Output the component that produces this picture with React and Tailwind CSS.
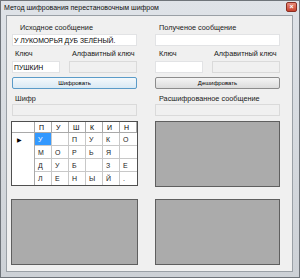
import React from 'react';

const font = { fontFamily: '"Liberation Sans", Arial, sans-serif' };

const header = ['П', 'У', 'Ш', 'К', 'И', 'Н'];
const rows = [
  ['У', '', 'П', 'У', 'К', 'О'],
  ['М', 'О', 'Р', 'Ь', 'Я', ''],
  ['Д', 'У', 'Б', '', 'З', 'Е'],
  ['Л', 'Е', 'Н', 'Ы', 'Й', '.'],
];

const Label = ({ children, className = '' }) => (
  <div className={`h-[10px] leading-[10px] text-[7.3px] text-[#1a1a1a] whitespace-nowrap ${className}`}>{children}</div>
);

const TextBox = ({ value = '', className = '', disabled = false }) => (
  <div
    className={`h-[12px] leading-[11px] text-[6.8px] text-black px-[1px] whitespace-nowrap overflow-hidden border ${
      disabled ? 'bg-[#f0f0f0] border-[#dadada]' : 'bg-white border-[#e2e3e5]'
    } ${className}`}
  >
    {value}
  </div>
);

const Button = ({ children, focused = false }) => (
  <div
    className={`h-[12px] rounded-[2px] border flex items-center justify-center text-[6px] text-black ${
      focused
        ? 'border-[#5b9bc8] bg-gradient-to-b from-[#f4f9fc] to-[#d9e9f4]'
        : 'border-[#8c8c8c] bg-gradient-to-b from-[#f5f5f5] to-[#dcdcdc]'
    }`}
  >
    {children}
  </div>
);

const GrayBox = ({ className = '' }) => (
  <div className={`h-[66px] bg-[#ababab] border border-[#5f5f5f] ${className}`} />
);

const CipherGrid = () => (
  <div className="-mx-[1px] border border-[#4f4f4f] bg-white">
    <div className="grid grid-cols-[23px_repeat(6,17px)]">
      <div className="h-[11px] border-b border-r border-[#a9a9a9]" />
      {header.map((h, i) => (
        <div key={i} className="h-[11px] leading-[11px] pl-[4px] text-[7px] border-b border-r border-[#a9a9a9] last:border-r-0">
          {h}
        </div>
      ))}
      {rows.map((r, ri) => (
        <React.Fragment key={ri}>
          <div className="h-[13px] flex items-center pl-[5px] border-r border-[#a9a9a9]">
            {ri === 0 && <span className="text-[6px] leading-none text-black">▶</span>}
          </div>
          {r.map((c, ci) => (
            <div
              key={ci}
              className={`h-[13px] leading-[13px] pl-[3px] text-[7px] border-b border-r border-[#c8c8c8] ${
                ci === 5 ? 'border-r-0' : ''
              } ${ri === 0 && ci === 0 ? 'bg-[#3399ff] text-white' : 'text-[#222]'} ${ri === 3 ? 'border-b-0' : ''}`}
            >
              {c}
            </div>
          ))}
        </React.Fragment>
      ))}
    </div>
  </div>
);

export default function App() {
  return (
    <div
      style={font}
      className="w-[300px] h-[278px] bg-gradient-to-b from-[#dfe3e8] to-[#cdd1d6] border border-[#6f747a] flex flex-col overflow-hidden"
    >
      {/* title bar */}
      <div className="h-[14px] flex items-center justify-between pl-[3px] pr-[2px]">
        <span className="text-[7px] text-[#111] whitespace-nowrap">Метод шифрования перестановочным шифром</span>
        <div className="w-[11px] h-[10px] mb-[3px] rounded-[2px] bg-gradient-to-b from-[#e88a7a] to-[#c8412c] border border-[#8a2e22] flex items-center justify-center text-[7px] leading-none text-white font-bold">
          ×
        </div>
      </div>

      {/* client area */}
      <div className="ml-[5px] mr-[6px] mb-[5px] flex-1 bg-[#f0f0f0] border border-[#9aa0a6] flex gap-[18px] pl-[5px] pt-[7px]">
        {/* left column */}
        <div className="w-[125px] flex flex-col">
          <Label className="pl-[8px]">Исходное сообщение</Label>
          <TextBox className="mt-[1px]" value="У ЛУКОМОРЬЯ ДУБ ЗЕЛЁНЫЙ." />
          <div className="mt-[3px] flex">
            <Label className="pl-[3px] w-[60px]">Ключ</Label>
            <Label>Алфавитный ключ</Label>
          </div>
          <div className="mt-[2px] flex gap-[9px]">
            <TextBox className="w-[48px]" value="ПУШКИН" />
            <TextBox className="flex-1" disabled />
          </div>
          <div className="mt-[4px]">
            <Button focused>Шифровать</Button>
          </div>
          <Label className="mt-[5px] pl-[3px]">Шифр</Label>
          <TextBox className="mt-[0px]" disabled />
          <div className="mt-[5px]">
            <CipherGrid />
          </div>
          <GrayBox className="mt-[13px] -mx-[1px]" />
        </div>

        {/* right column */}
        <div className="w-[125px] flex flex-col">
          <Label className="pl-[4px]">Полученое сообщение</Label>
          <TextBox className="mt-[1px]" />
          <div className="mt-[3px] flex">
            <Label className="pl-[4px] w-[59px]">Ключ</Label>
            <Label>Алфавитный ключ</Label>
          </div>
          <div className="mt-[2px] flex gap-[9px]">
            <TextBox className="w-[48px]" />
            <TextBox className="flex-1" disabled />
          </div>
          <div className="mt-[4px]">
            <Button>Дешифровать</Button>
          </div>
          <Label className="mt-[5px] pl-[4px]">Расшифрованное сообщение</Label>
          <TextBox disabled />
          <GrayBox className="mt-[5px]" />
          <GrayBox className="mt-[12px]" />
        </div>
      </div>
    </div>
  );
}
